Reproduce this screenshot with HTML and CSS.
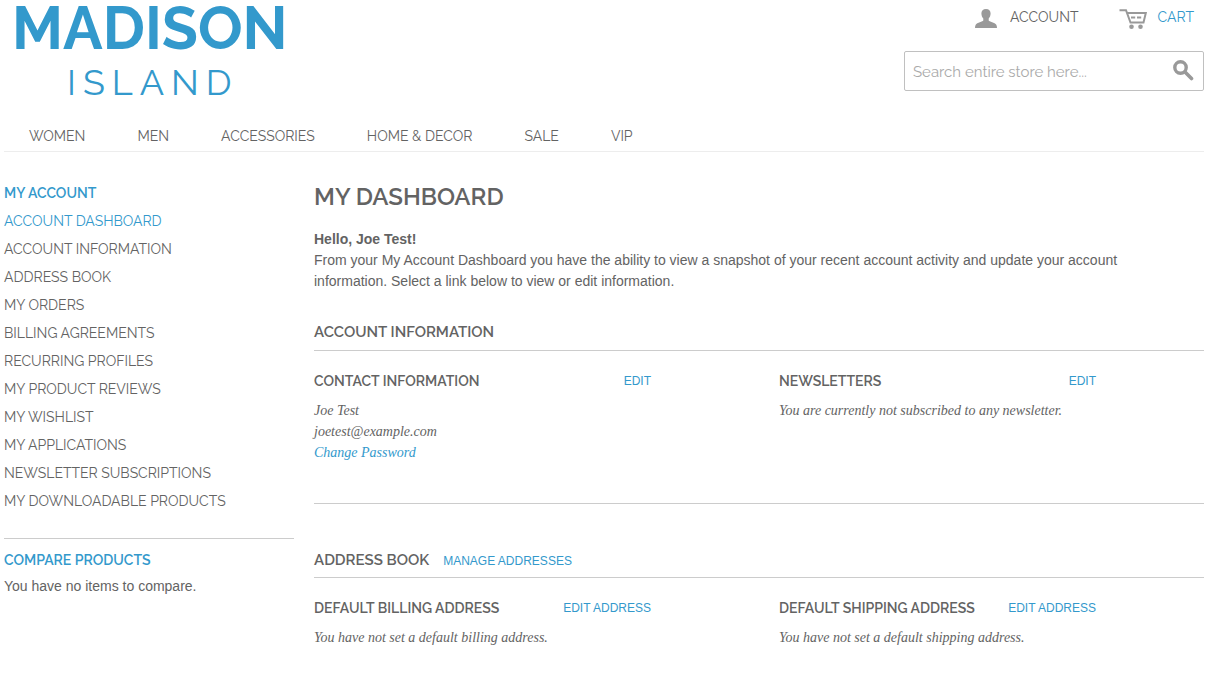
FILE: index.html
```html
<!DOCTYPE html>
<html lang="en">
<head>
<meta charset="utf-8">
<title>My Account</title>
<link rel="stylesheet" href="styles.css">
</head>
<body>
<div class="page">
  <header class="header">
    <a class="logo" href="#"><span class="logo-main">MADISON</span><span class="logo-sub">ISLAND</span></a>
    <div class="tools">
      <div class="quick">
        <a class="quick-link" href="#">
          <svg width="22" height="19" viewBox="0 0 22 19" aria-hidden="true"><path fill="#999" d="M11 0c2.900 0 4.700 1.900 4.600 4.600-.1 2.400-.8 3.700-1.900 4.900v2.100c.4 1.200 6.300 1.900 7.600 4.200.5.800.7 1.900.7 3.200H0c0-1.300.2-2.400.7-3.200 1.300-2.300 7.200-3 7.600-4.200V9.500C7.200 8.300 6.500 7 6.400 4.600 6.300 1.900 8.100 0 11 0z"/></svg>
          <span>ACCOUNT</span>
        </a>
        <a class="quick-link cart" href="#">
          <svg width="28" height="20" viewBox="0 0 28 20" aria-hidden="true"><g fill="none" stroke="#999" stroke-width="2"><path d="M.5 1.200H7L11.500 13.500h13L26.800 4H8"/><path d="M12 8.500h4.200M18 8.500h4.200" stroke-width="1.800"/></g><circle cx="12.500" cy="17.700" r="2.300" fill="#999"/><circle cx="21.500" cy="17.700" r="2.300" fill="#999"/></svg>
          <span>CART</span>
        </a>
      </div>
      <form class="search">
        <input class="search-input" type="search" aria-label="Search" placeholder="Search entire store here...">
        <button class="search-button" type="button" aria-label="Search">
          <svg width="21" height="21" viewBox="0 0 21 21" aria-hidden="true"><circle cx="7.500" cy="7.500" r="5.700" fill="none" stroke="#999" stroke-width="3.400"/><path d="M12 12l6.500 6.500" stroke="#999" stroke-width="3.600" stroke-linecap="round"/></svg>
        </button>
      </form>
    </div>
  </header>
  <nav class="nav">
    <a href="#">WOMEN</a><a href="#">MEN</a><a href="#">ACCESSORIES</a><a href="#">HOME &amp; DECOR</a><a href="#">SALE</a><a href="#">VIP</a>
  </nav>
  <div class="columns">
    <aside class="sidebar">
      <h2 class="side-title">MY ACCOUNT</h2>
      <ul class="side-list">
        <li><a class="current" href="#">ACCOUNT DASHBOARD</a></li>
        <li><a href="#">ACCOUNT INFORMATION</a></li>
        <li><a href="#">ADDRESS BOOK</a></li>
        <li><a href="#">MY ORDERS</a></li>
        <li><a href="#">BILLING AGREEMENTS</a></li>
        <li><a href="#">RECURRING PROFILES</a></li>
        <li><a href="#">MY PRODUCT REVIEWS</a></li>
        <li><a href="#">MY WISHLIST</a></li>
        <li><a href="#">MY APPLICATIONS</a></li>
        <li><a href="#">NEWSLETTER SUBSCRIPTIONS</a></li>
        <li><a href="#">MY DOWNLOADABLE PRODUCTS</a></li>
      </ul>
      <section class="compare">
        <h2 class="side-title">COMPARE PRODUCTS</h2>
        <p>You have no items to compare.</p>
      </section>
    </aside>
    <main class="main">
      <h1 class="page-title">MY DASHBOARD</h1>
      <div class="welcome">
        <p><strong>Hello, Joe Test!</strong></p>
        <p>From your My Account Dashboard you have the ability to view a snapshot of your recent account activity and update your account information. Select a link below to view or edit information.</p>
      </div>
      <section>
        <div class="box-head"><h2>ACCOUNT INFORMATION</h2></div>
        <div class="boxes ruled">
          <div class="box">
            <div class="box-title"><h3>CONTACT INFORMATION</h3><a href="#">EDIT</a></div>
            <p>Joe Test<br>joetest@example.com<br><a href="#">Change Password</a></p>
          </div>
          <div class="box">
            <div class="box-title"><h3>NEWSLETTERS</h3><a href="#">EDIT</a></div>
            <p>You are currently not subscribed to any newsletter.</p>
          </div>
        </div>
      </section>
      <section class="addresses">
        <div class="box-head"><h2>ADDRESS BOOK</h2><a href="#">MANAGE ADDRESSES</a></div>
        <div class="boxes">
          <div class="box">
            <div class="box-title"><h3>DEFAULT BILLING ADDRESS</h3><a href="#">EDIT ADDRESS</a></div>
            <p>You have not set a default billing address.</p>
          </div>
          <div class="box">
            <div class="box-title"><h3>DEFAULT SHIPPING ADDRESS</h3><a href="#">EDIT ADDRESS</a></div>
            <p>You have not set a default shipping address.</p>
          </div>
        </div>
      </section>
    </main>
  </div>
</div>
</body>
</html>
```
FILE: styles.css
```css
* { box-sizing: border-box; }
body {
  margin: 0;
  background: #fff;
  color: #636363;
  font: 14px/21px "Liberation Sans", Arial, sans-serif;
}
h1, h2, h3, p, ul { margin: 0; padding: 0; }
ul { list-style: none; }
a { color: #3399cc; text-decoration: none; }
.page { padding: 0 10px 0 4px; }

.header { display: flex; justify-content: space-between; align-items: flex-start; }
.logo {
  display: flex;
  flex-direction: column;
  align-items: center;
  padding-left: 8px;
  font-family: Raleway, Lato, sans-serif;
}
.logo-main { font-size: 59px; font-weight: 700; line-height: 58px; }
.logo-sub { padding-left: 6px; font-size: 36px; font-weight: 400; line-height: 48px; letter-spacing: 7px; }
.tools { width: 300px; padding-top: 5px; }
.quick { display: flex; justify-content: flex-end; gap: 41px; padding-right: 10px; }
.quick-link {
  display: flex;
  align-items: center;
  gap: 13px;
  height: 24px;
  color: #636363;
  font: 14px/24px Raleway, Lato, sans-serif;
}
.quick-link svg { margin-top: 3px; }
.cart { gap: 10px; color: #3399cc; }
.search {
  display: flex;
  align-items: center;
  height: 40px;
  margin-top: 22px;
  border: 1px solid #c0c0c0;
  border-radius: 2px;
}
.search-input {
  flex: 1;
  min-width: 0;
  height: 38px;
  padding: 2px 8px 0;
  border: 0;
  outline: 0;
  background: transparent;
  color: #636363;
  font: 15px Raleway, Lato, sans-serif;
}
.search-input::placeholder { color: #aaa; opacity: 1; }
.search-button { display: flex; padding: 0 9px 2px; border: 0; background: none; }

.nav {
  display: flex;
  gap: 52px;
  margin-top: 16px;
  padding: 0 25px;
  border-bottom: 1px solid #ededed;
}
.nav a { color: #636363; font: 14px/29px Raleway, Lato, sans-serif; }

.columns { display: flex; gap: 20px; padding-top: 30px; }
.sidebar { flex: 0 0 290px; }
.side-title { color: #3399cc; font: 600 14px/22px Raleway, Lato, sans-serif; }
.side-list { padding: 3px 0 23px; }
.side-list a { display: block; color: #636363; font: 14px/28px Raleway, Lato, sans-serif; }
.side-list .current { color: #3399cc; }
.compare { padding-top: 10px; border-top: 1px solid #ccc; }
.compare p { padding-top: 5px; }

.main { flex: 1; min-width: 0; }
.page-title { font: 600 24px/30px Raleway, Lato, sans-serif; }
.welcome { padding: 17px 30px 29px 0; }
.box-head {
  display: flex;
  align-items: baseline;
  gap: 14px;
  padding-bottom: 7px;
  border-bottom: 1px solid #ccc;
}
.box-head h2 { font: 600 15px/22px Raleway, Lato, sans-serif; }
.box-head a, .box-title a { font-size: 12px; }
.boxes { display: grid; grid-template-columns: 1fr 1fr; padding-top: 19px; }
.ruled { padding-bottom: 40px; border-bottom: 1px solid #ccc; }
.box + .box { padding-left: 20px; }
.box-title {
  display: flex;
  justify-content: space-between;
  align-items: flex-start;
  padding: 0 108px 8px 0;
}
.box-title h3 { font: 600 14px/22px Raleway, Lato, sans-serif; }
.box-title a { line-height: 22px; }
.box p { font: italic 14px/21px "Liberation Serif", serif; }
.addresses { padding-top: 45px; }
.addresses .box-head { padding-bottom: 5px; }
```
